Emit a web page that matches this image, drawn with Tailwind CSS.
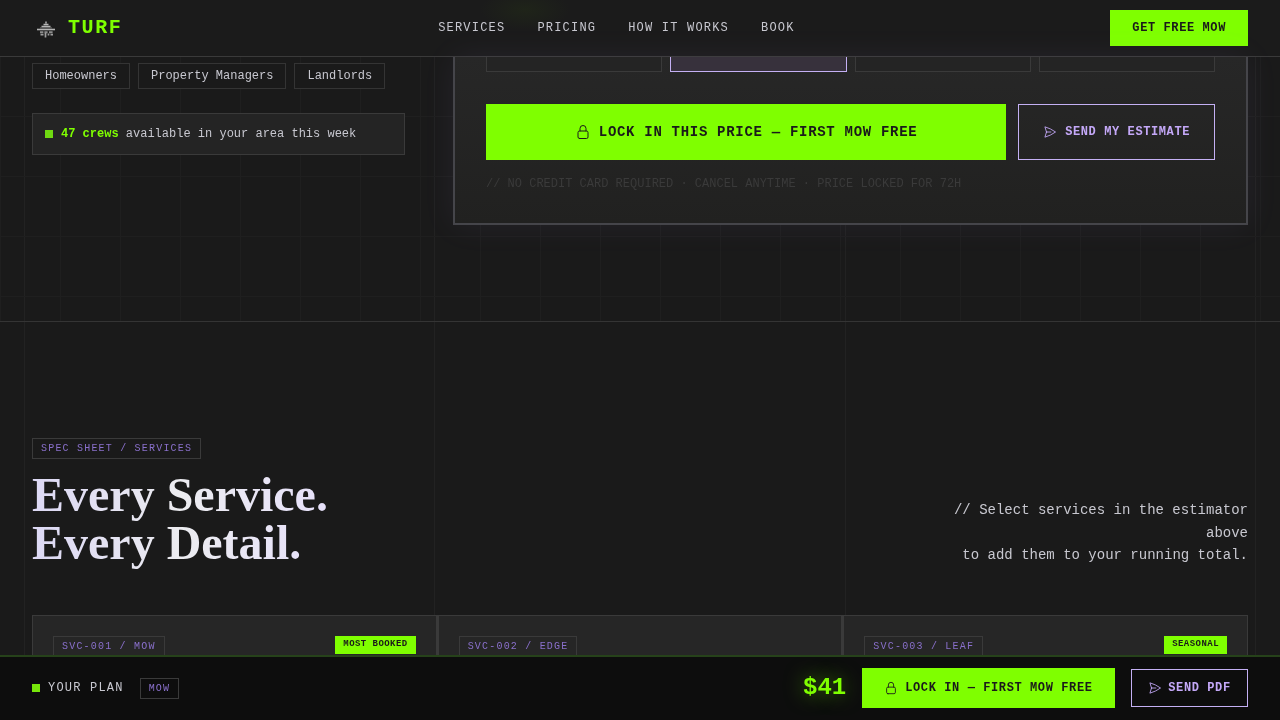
<!DOCTYPE html>
<html lang="en">

<head>
	<meta charset="UTF-8" />
	<meta name="viewport" content="width=device-width, initial-scale=1.0" />
	<script src="https://cdn.jsdelivr.net/npm/@tailwindcss/browser@4"></script>
	<title>TURF</title>
</head>

<body class="h-screen overflow-hidden bg-[#1a1a1a] font-['Liberation_Mono',monospace] text-[#c8c8d0]">

	<!-- vertical page rules -->
	<div class="fixed inset-y-0 inset-x-6 z-0 grid grid-cols-3 border-l border-[#222222]" aria-hidden="true">
		<div class="border-r border-[#222222]"></div>
		<div class="border-r border-[#222222]"></div>
		<div class="border-r border-[#222222]"></div>
	</div>

	<div class="relative z-10 flex h-screen flex-col">
		<header class="flex h-[57px] shrink-0 items-center justify-between border-b border-[#3a3a3a] bg-[#1b1b1b] bg-[radial-gradient(ellipse_45px_20px_at_525px_10px,#1f2419,transparent)] px-8 pb-px">
			<a href="#" class="flex items-center gap-2">
				<svg class="h-7 w-7" viewBox="0 0 28 28" fill="none" stroke="#b4b4b4">
					<path d="M14 7.5v2M11.5 10.5h5M9.5 12.5h9" stroke-width="1.5" />
					<path d="M8 13.8h12" stroke-width="1.2" stroke-opacity=".4" />
					<path d="M5 15.5h18" stroke-width="1.6" />
					<path d="M8 18.2h3.4M12.4 18.2h3.2M17 18.2h3.6" stroke-width="2" stroke-opacity=".75" />
					<path d="M8.5 20.7h3M13.5 19v4.5M16.5 19.5v2M18.5 20.7h2.5" stroke-width="1.7" stroke-opacity=".85" />
				</svg>
				<span class="text-xl leading-7 font-bold tracking-[1.6px] text-[#7fff00]">TURF</span>
			</a>
			<nav class="flex gap-8 text-xs leading-[18px] tracking-[1.2px]">
				<a href="#">SERVICES</a>
				<a href="#">PRICING</a>
				<a href="#">HOW IT WORKS</a>
				<a href="#">BOOK</a>
			</nav>
			<button class="h-9 bg-[#7fff00] px-[22px] text-xs font-bold tracking-[0.6px] text-[#1a1a1a]">GET FREE MOW</button>
		</header>

		<!-- estimator -->
		<section class="flex h-[265px] shrink-0 items-start justify-between border-b border-[#343434] bg-[linear-gradient(to_right,#1f1f1f_1px,transparent_1px),linear-gradient(to_bottom,#1f1f1f_1px,transparent_1px)] bg-[length:60px_60px] bg-[position:0_-1px] px-8">
			<div class="w-[373px] pt-1.5 text-xs">
				<div class="flex gap-2">
					<span class="h-[26px] border border-[#343434] bg-[#1a1a1a] px-3 leading-[25px]">Homeowners</span>
					<span class="h-[26px] border border-[#343434] bg-[#1a1a1a] px-3 leading-[25px]">Property Managers</span>
					<span class="h-[26px] border border-[#343434] bg-[#1a1a1a] px-3 leading-[25px]">Landlords</span>
				</div>
				<div class="mt-6 flex h-[42px] items-center gap-2 border border-[#3a3a3a] bg-[#242424] px-3">
					<span class="h-2 w-2 bg-[#6fd911]"></span>
					<p><span class="font-bold text-[#7fff00]">47 crews</span> available in your area this week</p>
				</div>
			</div>

			<div class="h-[168px] w-[795px] border-2 border-t-0 border-[#45454a] bg-linear-to-b from-[#272727] to-[#212120] px-[31px] shadow-[0_0_32px_rgba(180,160,255,0.07)]">
				<div class="grid h-[15px] grid-cols-4 gap-2">
					<div class="border border-t-0 border-[#3a3a3a] bg-[#242424]"></div>
					<div class="border border-t-0 border-[#c4b0f4] bg-[#37313c]"></div>
					<div class="border border-t-0 border-[#3a3a3a] bg-[#242424]"></div>
					<div class="border border-t-0 border-[#3a3a3a] bg-[#242424]"></div>
				</div>
				<div class="mt-8 flex h-14 gap-3 font-bold">
					<button class="flex flex-1 items-center justify-center gap-2 bg-[#7fff00] text-sm tracking-[0.7px] text-[#1a1a1a]">
						<svg class="h-4 w-4" viewBox="0 0 24 24" fill="none" stroke="currentColor" stroke-width="1.5" stroke-linecap="round" stroke-linejoin="round">
							<path d="M16.5 10.5V6.75a4.5 4.5 0 1 0-9 0v3.75m-.75 11.25h10.5a2.25 2.25 0 0 0 2.25-2.25v-6.75a2.25 2.25 0 0 0-2.25-2.25H6.75a2.25 2.25 0 0 0-2.25 2.25v6.75a2.25 2.25 0 0 0 2.25 2.25Z" />
						</svg>
						<span>LOCK IN THIS PRICE — FIRST MOW FREE</span>
					</button>
					<button class="flex items-center gap-2 border border-[#c4b0f4] px-6 text-xs tracking-[0.6px] text-[#c4a8f8]">
						<svg class="h-3.5 w-3.5" viewBox="0 0 24 24" fill="none" stroke="currentColor" stroke-width="1.5" stroke-linecap="round" stroke-linejoin="round">
							<path d="M6 12 3.269 3.125A59.769 59.769 0 0 1 21.485 12 59.768 59.768 0 0 1 3.27 20.875L5.999 12Zm0 0h7.5" />
						</svg>
						<span>SEND MY ESTIMATE</span>
					</button>
				</div>
				<p class="mt-[15px] text-xs leading-[18px] text-[#3a3a3a]">// NO CREDIT CARD REQUIRED · CANCEL ANYTIME · PRICE LOCKED FOR 72H</p>
			</div>
		</section>

		<!-- services -->
		<section class="min-h-0 flex-1 overflow-hidden px-8 pt-[116px]">
			<div class="flex items-end justify-between">
				<div>
					<span class="block h-[21px] w-fit border border-[#3a3a3a] px-2 text-[10px] leading-[20px] tracking-[1.2px] text-[#8a70cc]">SPEC SHEET / SERVICES</span>
					<h2 class="mt-3 -mb-2 bg-linear-to-r from-[#dcd8f4] via-[#ececf0] to-[#e6e0fa] bg-clip-text pb-2 font-['Liberation_Serif',serif] text-5xl leading-12 font-bold text-transparent">Every Service.<br />Every Detail.</h2>
				</div>
				<p class="mb-[0.5px] w-[300px] text-right text-sm leading-[22.4px]">// Select services in the estimator above<br />to add them to your running total.</p>
			</div>

			<div class="mt-12 grid h-40 grid-cols-3 gap-px bg-[#3a3a3a] text-[10px] leading-[20px] tracking-[1.2px] text-[#8a70cc]">
				<div class="flex items-start justify-between border border-[#3a3a3a] bg-[#262626] p-5">
					<span class="h-[21px] border border-[#3a3a3a] px-2">SVC-001 / MOW</span>
					<span class="h-[18px] bg-[#7fff00] px-2 text-[9px] leading-[16px] font-bold tracking-[0.45px] text-[#1a1a1a]">MOST BOOKED</span>
				</div>
				<div class="flex items-start justify-between border border-[#3a3a3a] bg-[#262626] p-5">
					<span class="h-[21px] border border-[#3a3a3a] px-2">SVC-002 / EDGE</span>
				</div>
				<div class="flex items-start justify-between border border-[#3a3a3a] bg-[#262626] p-5">
					<span class="h-[21px] border border-[#3a3a3a] px-2">SVC-003 / LEAF</span>
					<span class="h-[18px] bg-[#7fff00] px-2 text-[9px] leading-[16px] font-bold tracking-[0.45px] text-[#1a1a1a]">SEASONAL</span>
				</div>
			</div>
		</section>

		<!-- plan bar -->
		<footer class="flex h-[65px] shrink-0 items-center justify-between border-t-2 border-[#26421a] bg-[#0d0d0d] px-8 pb-px">
			<div class="flex items-center">
				<span class="mr-2 h-2 w-2 bg-[#77e60a]"></span>
				<span class="mr-4 pb-px text-xs tracking-[1.2px]">YOUR PLAN</span>
				<span class="h-[21px] border border-[#3a3a3a] px-2 text-[10px] leading-[19px] tracking-[1.2px] text-[#8a70cc]">MOW</span>
			</div>
			<div class="flex items-center gap-4 text-xs font-bold tracking-[0.6px]">
				<span class="pb-px text-2xl tracking-normal text-[#7fff00] [text-shadow:0_0_20px_rgba(127,255,0,0.5)]">$41</span>
				<button class="flex h-10 items-center gap-[7px] bg-[#7fff00] pr-[22.5px] pl-[22px] text-[#1a1a1a]">
					<svg class="h-3.5 w-3.5" viewBox="0 0 24 24" fill="none" stroke="currentColor" stroke-width="1.5" stroke-linecap="round" stroke-linejoin="round">
						<path d="M16.5 10.5V6.75a4.5 4.5 0 1 0-9 0v3.75m-.75 11.25h10.5a2.25 2.25 0 0 0 2.25-2.25v-6.75a2.25 2.25 0 0 0-2.25-2.25H6.75a2.25 2.25 0 0 0-2.25 2.25v6.75a2.25 2.25 0 0 0 2.25 2.25Z" />
					</svg>
					<span class="pb-px">LOCK IN — FIRST MOW FREE</span>
				</button>
				<button class="flex h-[38px] items-center gap-1.5 border border-[#c4b0f4] px-[16.3px] text-[#c4a8f8]">
					<svg class="h-3.5 w-3.5" viewBox="0 0 24 24" fill="none" stroke="currentColor" stroke-width="1.5" stroke-linecap="round" stroke-linejoin="round">
						<path d="M6 12 3.269 3.125A59.769 59.769 0 0 1 21.485 12 59.768 59.768 0 0 1 3.27 20.875L5.999 12Zm0 0h7.5" />
					</svg>
					<span class="pb-px">SEND PDF</span>
				</button>
			</div>
		</footer>
	</div>
</body>

</html>
